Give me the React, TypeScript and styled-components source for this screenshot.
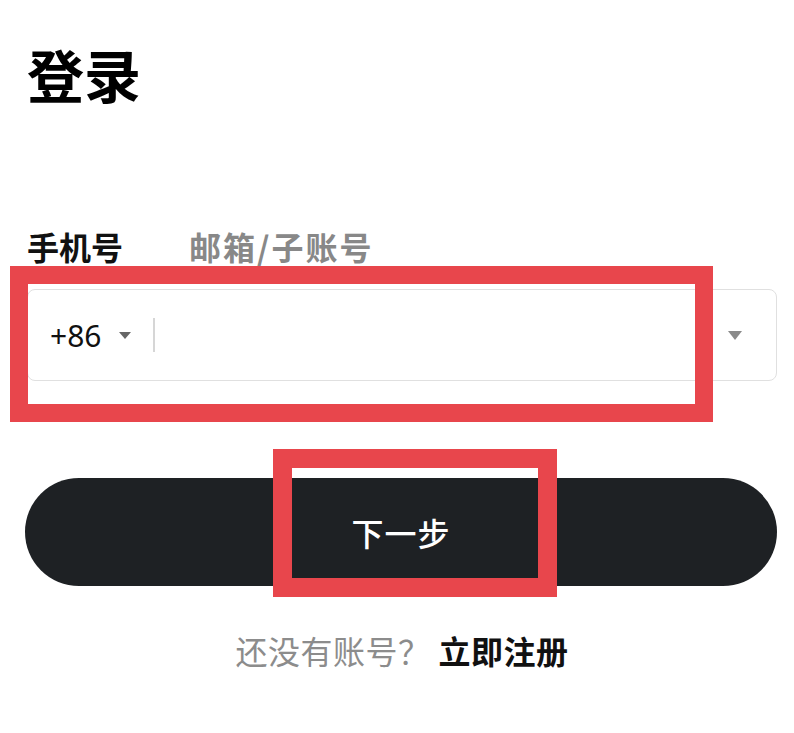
import React from "react"
import styled, { createGlobalStyle } from "styled-components"

const GlobalStyle = createGlobalStyle`
  html, body {
    margin: 0;
    padding: 0;
    background: #fff;
  }
  body {
    font-family: "Noto Sans CJK SC", "Noto Sans", sans-serif;
    color: #111;
  }
`

const Page = styled.main`
  position: relative;
  width: 794px;
  height: 733px;
  box-sizing: border-box;
  padding: 45px 17px 0 27px;
  display: flex;
  flex-direction: column;
  overflow: hidden;
`

const Title = styled.h1`
  margin: 0;
  font-size: 57px;
  line-height: 57px;
  font-weight: 700;
  color: #000;
`

const Tabs = styled.div`
  margin-top: 128px;
  display: flex;
  gap: 66px;
`

const Tab = styled.div<{ $active?: boolean }>`
  font-size: 32px;
  line-height: 32px;
  font-weight: 700;
  letter-spacing: ${(p) => (p.$active ? 0 : 2)}px;
  color: ${(p) => (p.$active ? "#111" : "#888")};
`

const InputBox = styled.div`
  margin-top: 27px;
  height: 92px;
  box-sizing: border-box;
  border: 1.5px solid #e0e0e0;
  border-radius: 8px;
  display: flex;
  align-items: center;
  padding: 0 34px 0 22px;
`

const Prefix = styled.div`
  display: flex;
  align-items: center;
  gap: 18px;
  font-family: "Noto Sans", sans-serif;
  font-size: 30px;
  color: #111;
`

const Caret = styled.span<{ $size: number; $color: string }>`
  width: 0;
  height: 0;
  border-left: ${(p) => p.$size / 2}px solid transparent;
  border-right: ${(p) => p.$size / 2}px solid transparent;
  border-top: ${(p) => p.$size * 0.65}px solid ${(p) => p.$color};
`

const Divider = styled.span`
  width: 2px;
  height: 34px;
  background: #d6d6d6;
  margin-left: 22px;
`

const Field = styled.div`
  flex: 1;
`

const NextButton = styled.button`
  margin-top: 97px;
  margin-left: -2px;
  height: 108px;
  border: none;
  border-radius: 54px;
  background: #1e2124;
  color: #fff;
  font-family: "Noto Sans CJK SC", sans-serif;
  font-size: 32px;
  font-weight: 500;
  letter-spacing: 1px;
`

const Footer = styled.p`
  margin: 48px 0 0;
  text-align: center;
  font-size: 32px;
  line-height: 32px;
  letter-spacing: 0.5px;
  color: #8c8c8c;
`

const Link = styled.span`
  color: #111;
  font-weight: 700;
  margin-left: 8px;
`

const Highlight = styled.div`
  position: absolute;
  box-sizing: border-box;
  border: 18px solid #e8464c;
  pointer-events: none;
`

export default function App() {
  return (
    <>
      <GlobalStyle />
      <Page>
        <Title>登录</Title>
        <Tabs>
          <Tab $active>手机号</Tab>
          <Tab>邮箱/子账号</Tab>
        </Tabs>
        <InputBox>
          <Prefix>
            +86
            <Caret $size={12} $color="#666" />
          </Prefix>
          <Divider />
          <Field />
          <Caret $size={15} $color="#8a8a8a" />
        </InputBox>
        <NextButton>下一步</NextButton>
        <Footer>
          还没有账号？<Link>立即注册</Link>
        </Footer>
        <Highlight style={{ left: 10, top: 266, width: 703, height: 156 }} />
        <Highlight style={{ left: 273, top: 449, width: 284, height: 148, borderWidth: 19 }} />
      </Page>
    </>
  )
}
